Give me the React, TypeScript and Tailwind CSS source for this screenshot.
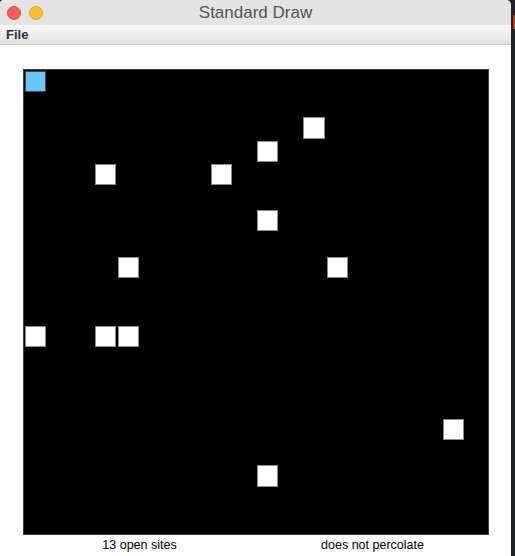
import React from "react";

const open: [number, number][] = [
  [12, 2],
  [10, 3],
  [3, 4],
  [8, 4],
  [10, 6],
  [4, 8],
  [13, 8],
  [0, 11],
  [3, 11],
  [4, 11],
  [18, 15],
  [10, 17],
];

export default function App() {
  const cells = [];
  for (let r = 0; r < 20; r++) {
    for (let c = 0; c < 20; c++) {
      const isFull = r === 0 && c === 0;
      const isOpen = open.some(([oc, or]) => oc === c && or === r);
      cells.push(
        <div key={`${r}-${c}`} className="p-[1px]">
          {isFull ? (
            <div className="w-full h-full bg-[#68c7f4] border border-[#2e4b5c]" />
          ) : isOpen ? (
            <div className="w-full h-full bg-white border border-[#8a8a8a]" />
          ) : null}
        </div>
      );
    }
  }

  return (
    <div className="w-[515px] h-[556px] bg-[#1f2328] flex overflow-hidden">
      <div className="w-[511px] h-[556px] bg-white flex flex-col rounded-tr-[5px] rounded-tl-[4px] overflow-hidden">
        <div className="h-[25px] bg-[#e4e4e4] flex items-center relative">
          <div className="absolute left-[7px] top-[6px] w-[14px] h-[14px] rounded-full bg-[#fd5b55] border border-[#e2463f]" />
          <div className="absolute left-[29px] top-[6px] w-[14px] h-[14px] rounded-full bg-[#fdbe2e] border border-[#dea123]" />
          <div
            className="w-full text-center text-[17px] leading-[25px] text-[#555555]"
            style={{ fontFamily: '"Liberation Sans", Arial, sans-serif' }}
          >
            Standard Draw
          </div>
        </div>
        <div
          className="h-[20px] bg-gradient-to-b from-[#f7f7f7] to-[#e3e3e3] border-b border-[#c9c9c9] flex items-center px-[6px] text-[13px] font-bold text-[#2f2f3a]"
          style={{ fontFamily: '"Liberation Sans", Arial, sans-serif' }}
        >
          File
        </div>
        <div className="pl-[23px] pt-[24px]">
          <div className="w-[466px] h-[466px] bg-black border border-[#3c3c3c] grid grid-cols-20 grid-rows-20">
            {cells}
          </div>
          <div
            className="w-[466px] flex text-[12.5px] leading-[15px] text-black pt-[3px]"
            style={{ fontFamily: '"Liberation Sans", Arial, sans-serif' }}
          >
            <div className="flex-1 text-center">13 open sites</div>
            <div className="flex-1 text-center">does not percolate</div>
          </div>
        </div>
      </div>
      <div className="flex-1 relative">
        <div className="absolute top-[15px] left-[2px] w-[2px] h-[14px] bg-[#b33a2c]" />
      </div>
    </div>
  );
}
